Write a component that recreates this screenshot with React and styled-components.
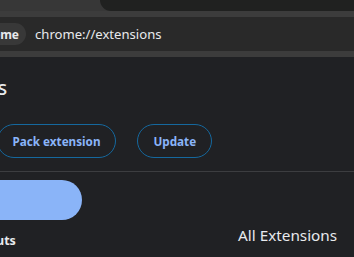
import styled, { createGlobalStyle } from 'styled-components'

const GlobalStyle = createGlobalStyle`
html, body {
    margin: 0;
    padding: 0;
    background: #202124;
}
body {
    font-family: "Noto Sans", "Liberation Sans", sans-serif;
    color: #e8eaed;
    width: 354px;
    height: 257px;
    overflow: hidden;
}
`

const Frame = styled.div`
width: 354px;
height: 257px;
overflow: hidden;
display: flex;
flex-direction: column;
`

const TabStrip = styled.div`
height: 11px;
display: flex;
background: #373737;
`

const TabGap = styled.div`
width: 100px;
`

const TabShape = styled.div`
flex: 1;
background: #202120;
border-bottom-left-radius: 11px;
`

const Band = styled.div`
height: 6px;
background: #3c3c3c;
`

const Toolbar = styled.div`
height: 34px;
background: #292929;
display: flex;
align-items: center;
gap: 9px;
`

const Chip = styled.span`
height: 22px;
display: flex;
align-items: center;
padding: 0 7px 0 20px;
margin-left: -48px;
border-radius: 11px;
background: #383838;
font-size: 12px;
font-weight: 700;
color: #e8eaed;
`

const Url = styled.span`
font-size: 13.1px;
color: #e8eaed;
`

const Content = styled.div`
flex: 1;
display: flex;
flex-direction: column;
`

const Title = styled.h1`
margin: 17px 0 0 ${p => p.$shift}px;
font-size: 20px;
font-weight: 500;
line-height: 28px;
white-space: nowrap;
`

const ButtonRow = styled.div`
display: flex;
gap: 21px;
margin: 22px 0 0 ${p => p.$shift}px;
`

const OutlineButton = styled.button`
height: 34px;
padding: 0 15px;
border: 1px solid #15689e;
border-radius: 17px;
background: transparent;
color: #8ab4f8;
font-family: inherit;
font-size: 11.7px;
font-weight: 700;
white-space: nowrap;
`

const Divider = styled.div`
height: 1px;
margin-top: 13px;
background: #3c3d40;
`

const Lower = styled.div`
display: flex;
`

const Sidebar = styled.div`
width: 200px;
display: flex;
flex-direction: column;
`

const NavPill = styled.div`
width: 200px;
height: 40px;
margin: 8px 0 0 -118px;
border-radius: 0 20px 20px 0;
background: #8ab4f8;
`

const NavLabel = styled.div`
margin: 12px 0 0 ${p => p.$shift}px;
font-size: 12.5px;
font-weight: 700;
white-space: nowrap;
`

const ListTitle = styled.div`
margin: 53px 0 0 38px;
font-size: 15.3px;
white-space: nowrap;
`

export default function App() {
    return (
        <>
            <GlobalStyle />
            <Frame>
                <TabStrip>
                    <TabGap />
                    <TabShape />
                </TabStrip>
                <Band />
                <Toolbar>
                    <Chip>Chrome</Chip>
                    <Url>chrome://extensions</Url>
                </Toolbar>
                <Band />
                <Content>
                    <Title $shift={-96}>Extensions</Title>
                    <ButtonRow $shift={-145}>
                        <OutlineButton>Load unpacked</OutlineButton>
                        <OutlineButton>Pack extension</OutlineButton>
                        <OutlineButton>Update</OutlineButton>
                    </ButtonRow>
                    <Divider />
                    <Lower>
                        <Sidebar>
                            <NavPill />
                            <NavLabel $shift={-106}>Keyboard shortcuts</NavLabel>
                        </Sidebar>
                        <ListTitle>All Extensions</ListTitle>
                    </Lower>
                </Content>
            </Frame>
        </>
    )
}
